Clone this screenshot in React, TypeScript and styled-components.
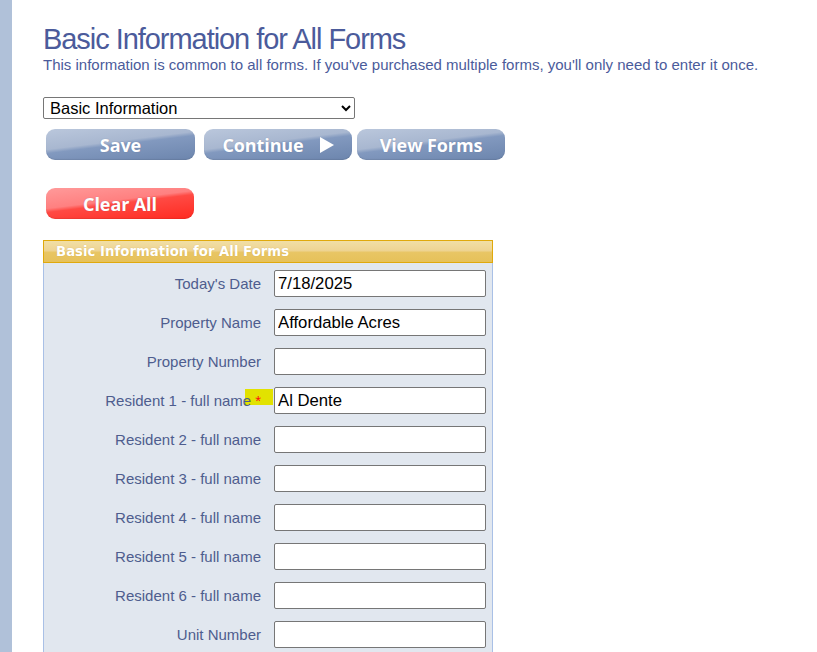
import React from "react";
import styled, { createGlobalStyle } from "styled-components";

const Global = createGlobalStyle`
  html, body { margin: 0; padding: 0; background: #ffffff; }
  body { font-family: "Liberation Sans", Arial, sans-serif; }
`;

const Page = styled.div`
  display: flex;
  min-height: 100vh;
`;

const Sidebar = styled.div`
  width: 12px;
  flex: 0 0 12px;
  background: #b0c1d9;
`;

const Main = styled.main`
  flex: 1;
  padding: 23px 0 0 31px;
`;

const Title = styled.h1`
  margin: 0;
  font-family: "Liberation Sans", Arial, sans-serif;
  font-weight: 400;
  font-size: 29px;
  line-height: 33px;
  letter-spacing: -1.05px;
  color: #4b5b9b;
`;

const Subtitle = styled.p`
  margin: 0;
  font-size: 15px;
  line-height: 17px;
  color: #4b5b9b;
`;

const Select = styled.select`
  display: block;
  margin-top: 24px;
  width: 312px;
  height: 22px;
  font-family: "Liberation Sans", Arial, sans-serif;
  font-size: 16.5px;
  color: #000;
  background: #fff;
  border: 1px solid #767676;
  border-radius: 2px;
  padding: 0 2px;
`;

const ButtonRow = styled.div`
  display: flex;
  align-items: center;
  margin: 10px 0 0 3px;
`;

const GlossButton = styled.button<{ $w: number; $ml?: number; $tone?: "blue" | "red" }>`
  width: ${(p) => p.$w}px;
  height: 31px;
  margin-left: ${(p) => p.$ml ?? 0}px;
  border: none;
  border-radius: 9px;
  padding: 0;
  display: flex;
  align-items: center;
  justify-content: center;
  gap: 16px;
  font-family: "Open Sans", "DejaVu Sans", sans-serif;
  font-weight: 700;
  font-size: 18px;
  letter-spacing: -0.1px;
  color: #ffffff;
  text-shadow: 0 0 1px rgba(60, 70, 110, 0.35);
  cursor: pointer;
  background: ${(p) =>
    p.$tone === "red"
      ? "linear-gradient(173deg, #ff9a9a 0%, #ff8080 42%, #ff4a44 50%, #ff2a20 100%)"
      : "linear-gradient(173deg, #bac7dc 0%, #a8b7d0 42%, #8299bf 50%, #6c85ad 100%)"};
  box-shadow: inset 0 -1px 1px rgba(0, 0, 0, 0.08);
`;

const Triangle = styled.span`
  width: 0;
  height: 0;
  border-top: 8px solid transparent;
  border-bottom: 8px solid transparent;
  border-left: 14px solid #ffffff;
`;

const ClearRow = styled.div`
  margin: 28px 0 0 3px;
`;

const Panel = styled.section`
  width: 450px;
  margin-top: 21px;
`;

const PanelHeader = styled.div`
  height: 21px;
  border: 1px solid #e0a90c;
  background: linear-gradient(180deg, #f1dfa6 0%, #eed493 45%, #e8c564 55%, #e6c15a 100%);
  padding-left: 12px;
  font-family: "DejaVu Sans", Verdana, sans-serif;
  font-weight: 700;
  font-size: 13.3px;
  line-height: 22px;
  letter-spacing: 0;
  color: #ffffff;
  text-shadow: 0 0 1px rgba(160, 120, 20, 0.4);
`;

const PanelBody = styled.div`
  background: #e1e7ef;
  border-left: 1px solid #a9c0e6;
  border-right: 1px solid #a9c0e6;
  border-bottom: 1px solid #a9c0e6;
  padding-top: 1px;
`;

const Row = styled.div`
  display: grid;
  grid-template-columns: 217px 212px;
  column-gap: 13px;
  align-items: center;
  padding: 6px 0;
`;

const Label = styled.label`
  text-align: right;
  font-size: 15px;
  line-height: 17px;
  color: #4e5d8e;
  isolation: isolate;
  white-space: nowrap;
`;

const Required = styled.span`
  position: relative;
  padding-left: 4px;
  color: #ff1010;
  &::before {
    content: "";
    position: absolute;
    left: -6px;
    right: -12px;
    top: -3px;
    height: 16px;
    background: #e2e200;
    z-index: -1;
  }
`;

const Input = styled.input`
  box-sizing: border-box;
  width: 212px;
  height: 27px;
  border: 1px solid #767676;
  border-radius: 2px;
  background: #fff;
  padding: 1px 3px;
  font-family: "Liberation Sans", Arial, sans-serif;
  font-size: 16.7px;
  color: #000;
`;

const fields: { label: string; value: string; required?: boolean }[] = [
  { label: "Today's Date", value: "7/18/2025" },
  { label: "Property Name", value: "Affordable Acres" },
  { label: "Property Number", value: "" },
  { label: "Resident 1 - full name", value: "Al Dente", required: true },
  { label: "Resident 2 - full name", value: "" },
  { label: "Resident 3 - full name", value: "" },
  { label: "Resident 4 - full name", value: "" },
  { label: "Resident 5 - full name", value: "" },
  { label: "Resident 6 - full name", value: "" },
  { label: "Unit Number", value: "" },
];

export default function App() {
  return (
    <>
      <Global />
      <Page>
        <Sidebar />
        <Main>
          <Title>Basic Information for All Forms</Title>
          <Subtitle>
            This information is common to all forms. If you've purchased multiple forms, you'll only need to enter it once.
          </Subtitle>
          <Select defaultValue="basic">
            <option value="basic">Basic Information</option>
          </Select>
          <ButtonRow>
            <GlossButton $w={149}>Save</GlossButton>
            <GlossButton $w={148} $ml={9}>
              Continue <Triangle />
            </GlossButton>
            <GlossButton $w={148} $ml={5}>View Forms</GlossButton>
          </ButtonRow>
          <ClearRow>
            <GlossButton $w={148} $tone="red">Clear All</GlossButton>
          </ClearRow>
          <Panel>
            <PanelHeader>Basic Information for All Forms</PanelHeader>
            <PanelBody>
              {fields.map((f) => (
                <Row key={f.label}>
                  <Label>
                    {f.label}
                    {f.required && <Required>*</Required>}
                  </Label>
                  <Input type="text" defaultValue={f.value} />
                </Row>
              ))}
            </PanelBody>
          </Panel>
        </Main>
      </Page>
    </>
  );
}
